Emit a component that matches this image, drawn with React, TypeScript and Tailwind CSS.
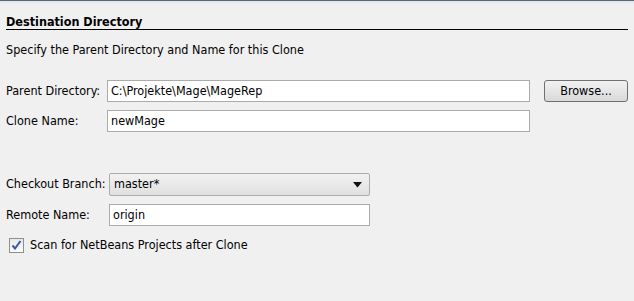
import React from "react";

const font = { fontFamily: '"DejaVu Sans Condensed", "DejaVu Sans", sans-serif' };

const Field = ({ value, width }: { value: string; width: string }) => (
  <div
    className={`${width} h-[22px] bg-white border border-[#ababab] flex items-center pl-[3px] text-[12.5px] text-black`}
  >
    {value}
  </div>
);

export default function App() {
  return (
    <div
      className="w-[634px] h-[301px] bg-[#f0f0f0] text-black overflow-hidden"
      style={font}
    >
      <div className="h-[1px] bg-[#5b6673]" />
      <div className="h-[2px] bg-[#e3e9ef]" />
      <div className="px-[6px]">
        <div className="mt-[12px] w-[622px] border-b border-black pb-[0px] text-[12.5px] font-bold leading-[14px]">
          Destination Directory
        </div>
        <div className="mt-[13px] text-[12.5px] leading-[14px]">
          Specify the Parent Directory and Name for this Clone
        </div>

        <div className="mt-[23px] flex items-center">
          <div className="w-[101px] text-[12.5px]">Parent Directory:</div>
          <Field value="C:\Projekte\Mage\MageRep" width="w-[423px]" />
          <button className="ml-[14px] w-[84px] h-[22px] rounded-[3px] border border-[#707070] bg-gradient-to-b from-[#f2f2f2] to-[#d9d9d9] text-[12.5px]">
            Browse...
          </button>
        </div>
        <div className="mt-[8px] flex items-center">
          <div className="w-[101px] text-[12.5px]">Clone Name:</div>
          <Field value="newMage" width="w-[423px]" />
        </div>

        <div className="mt-[41px] flex items-center">
          <div className="w-[103px] text-[12.5px]">Checkout Branch:</div>
          <div className="w-[261px] h-[23px] border border-[#acacac] rounded-[2px] bg-gradient-to-b from-[#f2f2f2] to-[#e0e0e0] flex items-center pl-[4px] pr-[7px] text-[12.5px]">
            <span className="flex-1">master*</span>
            <svg width="9" height="6" viewBox="0 0 9 6">
              <path d="M0 0 H9 L4.5 5.5 Z" fill="#111" />
            </svg>
          </div>
        </div>
        <div className="mt-[8px] flex items-center">
          <div className="w-[103px] text-[12.5px]">Remote Name:</div>
          <Field value="origin" width="w-[261px]" />
        </div>

        <div className="mt-[10px] ml-[3px] flex items-center">
          <div className="w-[15px] h-[15px] border border-[#8f8f8f] bg-gradient-to-b from-[#e8e8e8] to-[#fbfbfb] flex items-center justify-center">
            <svg width="11" height="10" viewBox="0 0 11 10">
              <path d="M1.5 5.5 L4 8.5 L9.5 1" stroke="#3a57a8" strokeWidth="2" fill="none" />
            </svg>
          </div>
          <span className="ml-[6px] text-[12.5px]">Scan for NetBeans Projects after Clone</span>
        </div>
      </div>
    </div>
  );
}
